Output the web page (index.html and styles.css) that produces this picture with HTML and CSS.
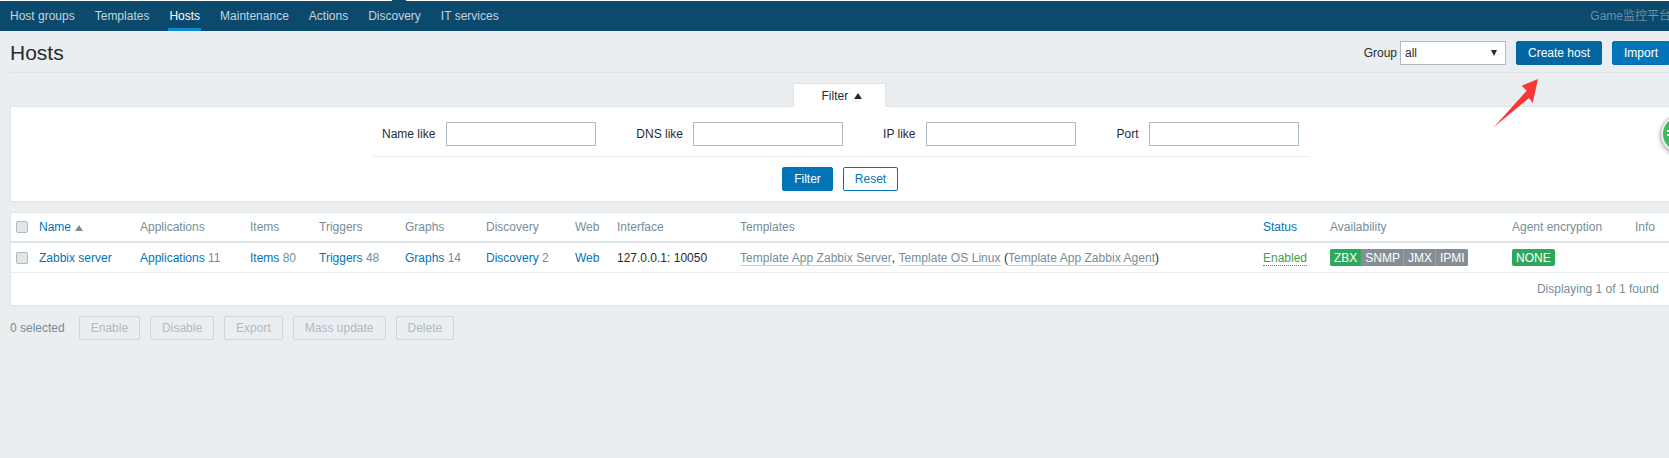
FILE: index.html
```html
<!DOCTYPE html>
<html lang="en">
<head>
  <meta charset="UTF-8">
  <title>Hosts</title>
  <link rel="stylesheet" href="styles.css">
</head>
<body>
<div class="topnav">
  <span class="nav-notch"></span>
  <ul class="nav-list">
    <li><a>Host groups</a></li>
    <li><a>Templates</a></li>
    <li class="selected"><a>Hosts</a></li>
    <li><a>Maintenance</a></li>
    <li><a>Actions</a></li>
    <li><a>Discovery</a></li>
    <li><a>IT services</a></li>
  </ul>
  <div class="brand">Game监控平台</div>
</div>

<div class="page">
  <div class="header">
    <h1>Hosts</h1>
    <div class="header-ctl">
      <label>Group</label>
      <div class="select">all<span class="select-arrow"></span></div>
      <button class="btn btn-dark">Create host</button>
      <button class="btn btn-import">Import</button>
    </div>
  </div>

  <div class="filter-tabrow"><div class="filter-tab">Filter <span class="tri-up"></span></div></div>
  <div class="filter-box">
    <div class="filter-fields">
      <label>Name like</label><input type="text" class="f-name">
      <label class="l-dns">DNS like</label><input type="text">
      <label class="l-ip">IP like</label><input type="text">
      <label class="l-port">Port</label><input type="text">
    </div>
    <div class="filter-actions">
      <button class="btn btn-filter">Filter</button>
      <button class="btn btn-alt">Reset</button>
    </div>
  </div>

  <div class="list-box">
    <div class="row row-head">
      <span class="c-check"><span class="checkbox"></span></span>
      <span class="c-name"><a>Name</a> <span class="tri-sort"></span></span>
      <span class="c-app">Applications</span>
      <span class="c-items">Items</span>
      <span class="c-trig">Triggers</span>
      <span class="c-graph">Graphs</span>
      <span class="c-disc">Discovery</span>
      <span class="c-web">Web</span>
      <span class="c-if">Interface</span>
      <span class="c-tpl">Templates</span>
      <span class="c-status"><a>Status</a></span>
      <span class="c-avail">Availability</span>
      <span class="c-enc">Agent encryption</span>
      <span class="c-info">Info</span>
    </div>
    <div class="row row-body">
      <span class="c-check"><span class="checkbox"></span></span>
      <span class="c-name"><a>Zabbix server</a></span>
      <span class="c-app"><a>Applications</a> 11</span>
      <span class="c-items"><a>Items</a> 80</span>
      <span class="c-trig"><a>Triggers</a> 48</span>
      <span class="c-graph"><a>Graphs</a> 14</span>
      <span class="c-disc"><a>Discovery</a> 2</span>
      <span class="c-web"><a>Web</a></span>
      <span class="c-if dark">127.0.0.1: 10050</span>
      <span class="c-tpl"><a class="tpl">Template App Zabbix Server</a><span class="dark">,</span> <a class="tpl">Template OS Linux</a> <span class="dark">(</span><a class="tpl">Template App Zabbix Agent</a><span class="dark">)</span></span>
      <span class="c-status"><a class="enabled">Enabled</a></span>
      <span class="c-avail"><span class="badges"><span class="bdg on">ZBX</span><span class="bdg">SNMP</span><span class="bdg">JMX</span><span class="bdg">IPMI</span></span></span>
      <span class="c-enc"><span class="bdg on solo">NONE</span></span>
      <span class="c-info"></span>
    </div>
    <div class="list-foot">Displaying 1 of 1 found</div>
  </div>

  <div class="actions">
    <span class="sel-count">0 selected</span>
    <button class="btn-off">Enable</button>
    <button class="btn-off">Disable</button>
    <button class="btn-off">Export</button>
    <button class="btn-off">Mass update</button>
    <button class="btn-off">Delete</button>
  </div>
</div>

<svg class="arrow" width="50" height="60" viewBox="0 0 50 60">
  <path d="M3 52 L35.7 15.7 L30.7 10.7 L47 4 L41.7 28 L38 23 Z" fill="#f93737"/>
</svg>
<svg class="float-ball" width="46" height="46" viewBox="0 0 46 46">
  <circle cx="21" cy="21" r="19.5" fill="#e9ebe9" stroke="#c4c8c5"/>
  <circle cx="21" cy="21" r="17" fill="#3cba5e"/>
  <rect x="8" y="17" width="8" height="2" fill="#fff"/>
  <rect x="8" y="21" width="8" height="2" fill="#fff"/>
</svg>
</body>
</html>
```

FILE: styles.css
```css
*{box-sizing: border-box;margin: 0;padding: 0;list-style: none;}
html,body{height: 100%;}
body{position: relative;overflow: hidden;background: #ebeef0;color: #1f2c33;font: 12px/14px "Liberation Sans", "Noto Sans CJK SC", sans-serif;}
a{color: #0275b8;}
button{font: inherit;white-space: nowrap;}

/* top bar */
.topnav{position: relative;display: flex;justify-content: space-between;height: 31px;background: #0b496d;border-top: 1px solid #fff;}
.nav-notch{position: absolute;left: 392px;top: -1px;width: 14px;height: 1px;background: #0b496d;}
.nav-list{display: flex;padding-left: 2px;}
.nav-list li{height: 30px;padding: 8px 8px 0;margin-right: 4px;color: #c6d5de;}
.nav-list li a{color: inherit;}
.nav-list .selected{padding: 8px 1px 0;margin: 0 11px 0 7px;color: #fff;border-bottom: 3px solid #0f8ccf;}
.brand{padding-top: 8px;margin-right: -2px;color: #6d8fa3;white-space: nowrap;}

.page{padding: 0 0 0 10px;}
.header{display: flex;align-items: center;justify-content: space-between;height: 42px;border-bottom: 1px solid #dfe4e7;}
h1{padding-top: 3px;font-size: 21px;font-weight: 400;line-height: 24px;}
.header-ctl{display: flex;align-items: center;margin-right: -1px;padding-top: 3px;}
.header-ctl label{margin-right: 3px;}
.select{position: relative;width: 106px;height: 24px;margin-right: 10px;padding: 4px;background: #fff;border: 1px solid #acbbc4;}
.select-arrow{position: absolute;right: 8px;top: 8px;border-top: 6px solid #1f2c33;border-left: 3px solid transparent;border-right: 3px solid transparent;}

.btn{height: 24px;padding: 0;color: #fff;background: #0275b8;border: 1px solid #0275b8;border-radius: 2px;}
.btn-dark{width: 86px;background: #0467a1;border-color: #0467a1;}
.btn-import{width: 58px;margin-left: 10px;}
.btn-filter{width: 51px;}
.btn-alt{width: 55px;color: #0275b8;background: #fff;}

/* filter */
.filter-tabrow{display: flex;justify-content: center;height: 23px;margin-top: 10px;padding-right: 1px;}
.filter-tab{position: relative;z-index: 1;width: 93px;height: 24px;padding: 5px 0 0 5px;text-align: center;background: #fff;border: 1px solid #dfe4e7;border-bottom: 0;}
.tri-up{display: inline-block;margin-left: 2px;vertical-align: 1px;border-bottom: 6px solid #1f2c33;border-left: 4px solid transparent;border-right: 4px solid transparent;}
.filter-box{height: 96px;padding-top: 15px;background: #fff;border: 1px solid #dfe4e7;border-right: 0;}
.filter-fields{display: flex;align-items: center;width: 938px;height: 35px;margin-left: 361px;padding-bottom: 10px;border-bottom: 1px solid #ebeef0;}
.filter-fields label{padding-left: 10px;margin-right: 10px;}
.filter-fields input{width: 150px;height: 24px;border: 1px solid #acbbc4;background: #fff;}
.l-dns{margin-left: 30px;}
.l-ip{margin-left: 30px;}
.l-port{margin-left: 31px;}
.filter-fields label:first-child{padding-left: 10px;margin-right: 11px;}
.filter-actions{display: flex;justify-content: center;gap: 10px;padding: 10px 0 0;}

/* host list */
.list-box{height: 94px;margin-top: 10px;background: #fff;border: 1px solid #dfe4e7;border-right: 0;}
.row{display: flex;align-items: center;color: #768d99;}
.row-head{height: 30px;border-bottom: 2px solid #dfe4e7;}
.row-body{height: 30px;border-bottom: 1px solid #ebeef0;}
.row span[class^="c-"]{flex: none;white-space: nowrap;}
.c-check{width: 28px;padding-left: 5px;}
.checkbox{display: block;width: 12px;height: 12px;background: #e3e6e8;border: 1px solid #acbbc4;border-radius: 2px;}
.c-name{width: 101px;}
.c-app{width: 110px;}
.c-items{width: 69px;}
.c-trig{width: 86px;}
.c-graph{width: 81px;}
.c-disc{width: 89px;}
.c-web{width: 42px;}
.c-if{width: 123px;}
.c-tpl{width: 523px;}
.c-status{width: 67px;}
.c-avail{width: 182px;}
.c-enc{width: 123px;}
.c-info{width: 30px;}
.tri-sort{display: inline-block;margin-left: 1px;border-bottom: 6px solid #768d99;border-left: 4px solid transparent;border-right: 4px solid transparent;}
.dark{color: #1f2c33;}
.row .dark{color: #1f2c33;}
a.tpl{color: #768d99;letter-spacing: .04px;border-bottom: 1px solid #c5ced3;}
a.enabled{color: #429e47;border-bottom: 1px dotted #429e47;}
.badges{display: inline-flex;background: #858e94;border-radius: 2px;}
.bdg{display: inline-block;height: 17px;padding: 2px 3px 0 4px;color: #fff;line-height: 15px;background: #858e94;border-right: 1px solid #9aa2a7;}
.bdg:last-child{padding-right: 3px;border-right: 0;border-radius: 0 2px 2px 0;}
.bdg.on{padding-right: 4px;background: #2fa85c;border-radius: 2px 0 0 2px;border-right: 0;}
.bdg.solo{border-radius: 2px;}
.list-foot{width: 1648px;padding-top: 9px;text-align: right;color: #768d99;}

/* mass actions */
.actions{display: flex;align-items: center;margin-top: 10px;}
.sel-count{margin-right: 14px;color: #768d99;}
.btn-off{height: 24px;padding: 0 11px;margin-right: 10px;color: #acbbc4;background: #ebeef0;border: 1px solid #cfd6da;border-radius: 2px;}

/* screenshot annotation and floating widget */
.arrow{position: absolute;left: 1491px;top: 75px;}
.float-ball{position: absolute;left: 1659px;top: 113px;filter: drop-shadow(0 2px 2px rgba(0,0,0,.3));}
```
